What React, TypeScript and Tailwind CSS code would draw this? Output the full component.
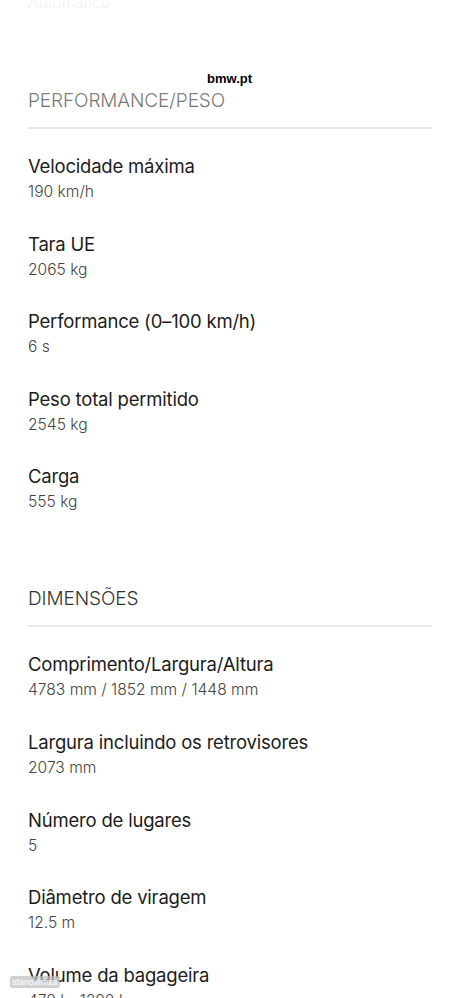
const font = { fontFamily: "Inter, 'Noto Sans', sans-serif" };

type Spec = { label: string; value: string };

const performance: Spec[] = [
  { label: "Velocidade máxima", value: "190 km/h" },
  { label: "Tara UE", value: "2065 kg" },
  { label: "Performance (0–100 km/h)", value: "6 s" },
  { label: "Peso total permitido", value: "2545 kg" },
  { label: "Carga", value: "555 kg" },
];

const dimensions: Spec[] = [
  { label: "Comprimento/Largura/Altura", value: "4783 mm / 1852 mm / 1448 mm" },
  { label: "Largura incluindo os retrovisores", value: "2073 mm" },
  { label: "Número de lugares", value: "5" },
  { label: "Diâmetro de viragem", value: "12.5 m" },
  { label: "Volume da bagageira", value: "470 l - 1290 l" },
];

function SpecItem({ label, value }: Spec) {
  return (
    <div className="flex flex-col">
      <span className="text-[18.5px] leading-[26px] text-[#1c1c1c] tracking-[-0.2px]">{label}</span>
      <span className="text-[15.6px] leading-[26px] text-[#454545] font-light">{value}</span>
    </div>
  );
}

function Section({ title, items }: { title: string; items: Spec[] }) {
  return (
    <section className="flex flex-col">
      <h2 className="text-[19px] leading-[26px] font-light text-[#333] tracking-[-0.1px]">{title}</h2>
      <div className="h-[2px] bg-[#e6e6e6] mt-[13px] mb-[24px]" />
      <div className="flex flex-col gap-[25.6px]">
        {items.map((s) => (
          <SpecItem key={s.label} {...s} />
        ))}
      </div>
    </section>
  );
}

export default function App() {
  return (
    <div className="relative w-[459px] h-[998px] overflow-hidden bg-white" style={font}>
      <div className="flex flex-col pl-[28px] pr-[27px]">
        {/* tail of previous section */}
        <span className="-mt-[10px] text-[15.6px] leading-[26px] font-light text-[#454545]">Automático</span>

        <div className="mt-[72px]">
          <Section title="PERFORMANCE/PESO" items={performance} />
        </div>

        <div className="mt-[71px]">
          <Section title="DIMENSÕES" items={dimensions} />
        </div>
      </div>

      {/* top fade */}
      <div className="absolute inset-x-0 top-0 h-[140px] bg-linear-to-b from-white/95 via-white/60 to-white/0 pointer-events-none" />

      {/* source label */}
      <span
        className="absolute left-[207px] top-[70px] text-[13px] font-bold text-black leading-[18px]"
        style={{ fontFamily: "'Liberation Sans', Arial, sans-serif" }}
      >
        bmw.pt
      </span>

      {/* watermark */}
      <span
        className="absolute left-[10px] top-[976px] px-[2px] text-[9px] leading-[12px] text-white bg-[#bdbdbd]/70 rounded-[2px]"
        style={{ fontFamily: "'Liberation Sans', Arial, sans-serif" }}
      >
        standvirtual
      </span>
    </div>
  );
}
